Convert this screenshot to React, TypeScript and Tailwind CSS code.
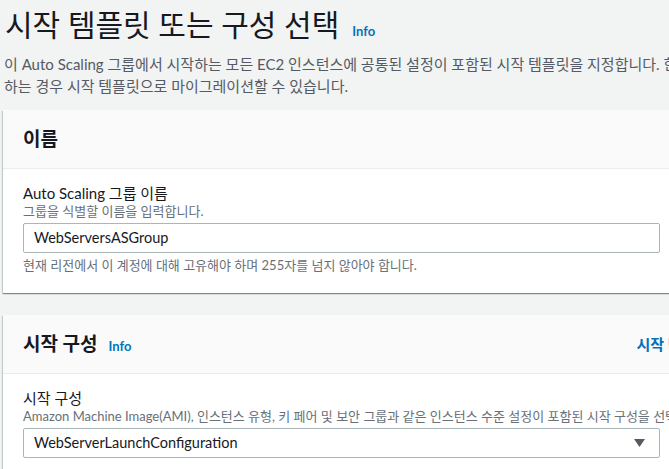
import React from 'react'

const font = { fontFamily: 'Lato, "Noto Sans CJK KR", sans-serif' }

function Caret() {
    return (
        <svg width="11" height="8" viewBox="0 0 11 8" className="shrink-0">
            <path d="M0 0 H11 L5.5 8 Z" fill="#545b64" />
        </svg>
    )
}

function Card({ title, info = false, action, children }: { title: string; info?: boolean; action?: string; children: React.ReactNode }) {
    return (
        <section className="w-[785px] bg-white shadow-[0_1px_1px_0_rgba(0,28,36,0.3),1px_1px_1px_0_rgba(0,28,36,0.15),-1px_1px_1px_0_rgba(0,28,36,0.15)]">
            {/* Header */}
            <div className="h-[59px] flex items-center justify-between px-5 bg-[#fafafa] border-b border-[#eaeded]">
                <div className="flex items-baseline gap-[11px]">
                    <h2 className="text-[19px] leading-6 font-bold text-[#16191f]">{title}</h2>
                    {info && <span className="text-[13px] font-bold text-[#0073bb]">Info</span>}
                </div>
                {action && <span className="text-[15px] font-bold text-[#0073bb] whitespace-nowrap">{action}</span>}
            </div>
            {/* Body */}
            <div className="px-5 pt-[14px] pb-5">{children}</div>
        </section>
    )
}

export default function App() {
    return (
        <div className="w-[669px] h-[469px] overflow-hidden bg-[#f2f3f3] text-[#16191f]" style={font}>
            <div className="w-[900px] pl-[3px]">
                {/* Page heading */}
                <div className="pt-[6px] pl-[2px] flex items-baseline gap-[13px]">
                    <h1 className="text-[30px] leading-9 font-normal">시작 템플릿 또는 구성 선택</h1>
                    <span className="text-[13px] font-bold text-[#0073bb]">Info</span>
                </div>
                <p className="mt-[11px] pl-[1px] text-[15px] leading-[22px] text-[#545b64] whitespace-nowrap">
                    이 Auto Scaling 그룹에서 시작하는 모든 EC2 인스턴스에 공통된 설정이 포함된 시작 템플릿을 지정합니다. 한편 시작 구성을 사용
                    <br />
                    하는 경우 시작 템플릿으로 마이그레이션할 수 있습니다.
                </p>

                <div className="mt-[13px] flex flex-col gap-[22px]">
                    <Card title="이름">
                        <label className="block text-[15px] leading-5">Auto Scaling 그룹 이름</label>
                        <p className="text-[13px] leading-4 text-[#687078]">그룹을 식별할 이름을 입력합니다.</p>
                        <div className="mt-1 w-[637px] h-[30px] flex items-center px-[10px] border border-[#aab7b8] rounded-[2px] text-[14.5px]">
                            WebServersASGroup
                        </div>
                        <p className="mt-1 text-[13px] leading-4 text-[#687078]">현재 리전에서 이 계정에 대해 고유해야 하며 255자를 넘지 않아야 합니다.</p>
                    </Card>

                    <Card title="시작 구성" info action="시작 템플릿으로 전환">
                        <label className="block text-[15px] leading-5">시작 구성</label>
                        <p className="text-[13px] leading-4 text-[#687078] whitespace-nowrap">
                            Amazon Machine Image(AMI), 인스턴스 유형, 키 페어 및 보안 그룹과 같은 인스턴스 수준 설정이 포함된 시작 구성을 선택합니다.
                        </p>
                        <div className="mt-1 w-[637px] h-[30px] flex items-center justify-between pl-[10px] pr-[14px] border border-[#aab7b8] rounded-[2px] text-[14.5px]">
                            <span>WebServerLaunchConfiguration</span>
                            <Caret />
                        </div>
                    </Card>
                </div>
            </div>
        </div>
    )
}
